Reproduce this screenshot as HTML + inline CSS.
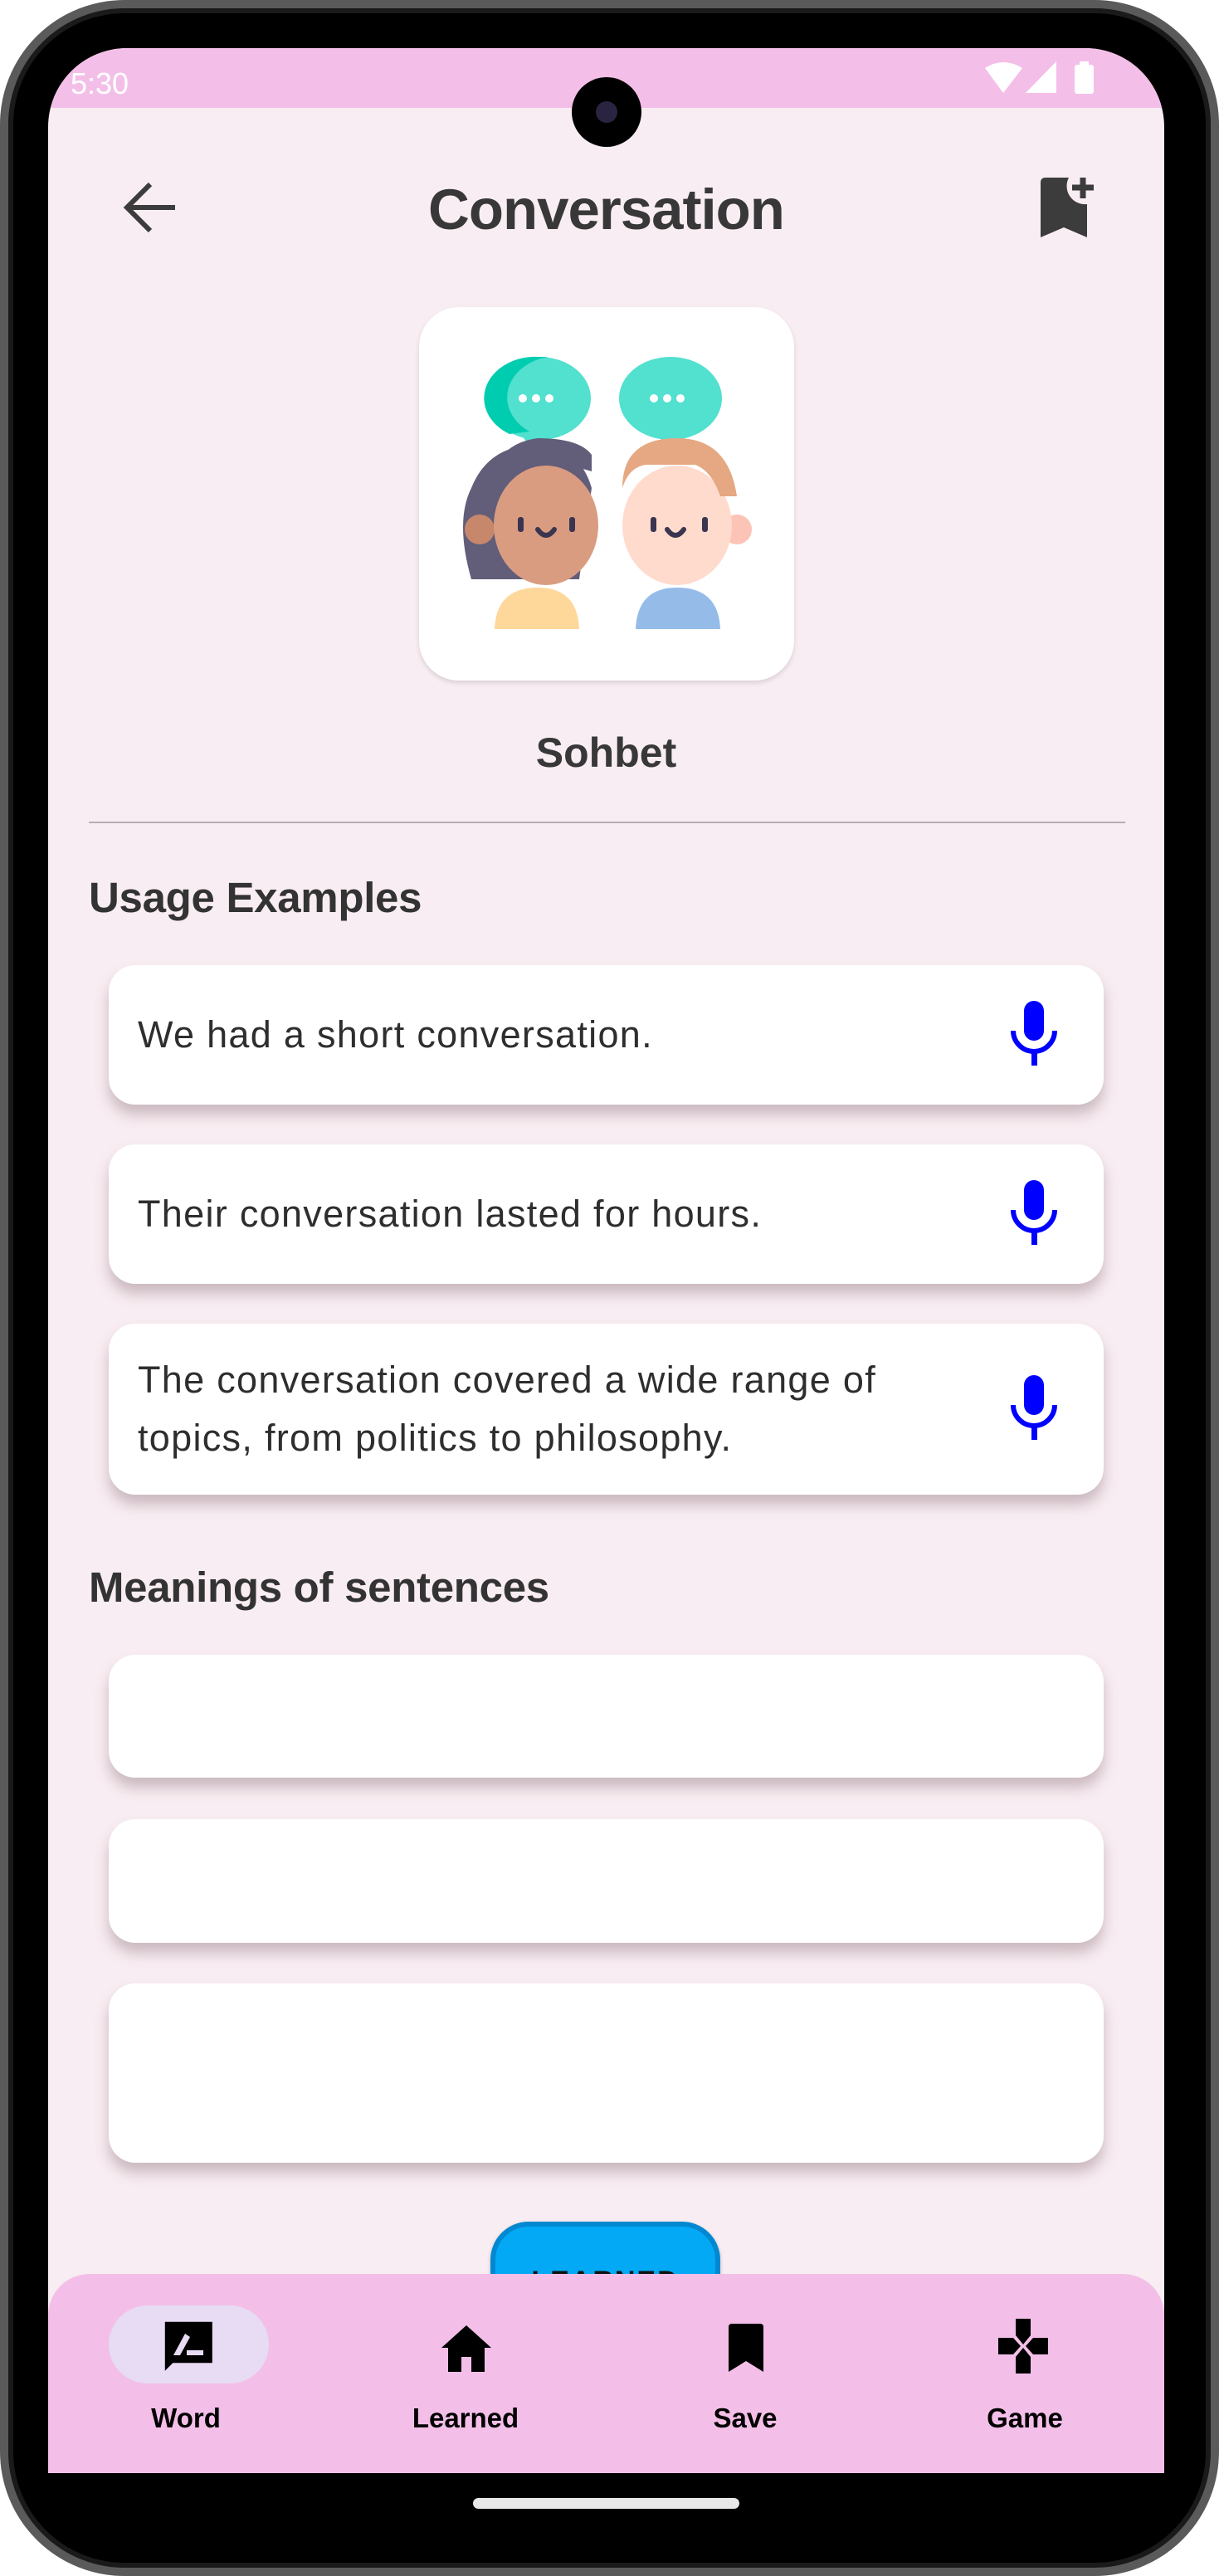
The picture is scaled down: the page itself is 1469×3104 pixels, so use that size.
<!DOCTYPE html>
<html><head><meta charset="utf-8">
<style>
*{margin:0;padding:0;box-sizing:border-box}
html,body{width:1469px;height:3104px;background:#fff;overflow:hidden;font-family:"Liberation Sans",sans-serif}
.frame{position:absolute;left:0;top:0;width:1469px;height:3104px;border-radius:150px;background:#000;border:10px solid #5a5a5a;box-shadow:inset 0 0 0 6px #1a1a1a}
.screen{position:absolute;left:58px;top:58px;width:1345px;height:2922px;background:#f8edf2;border-radius:95px 95px 0 0;overflow:hidden}
.status{position:absolute;left:0;top:0;width:1345px;height:72px;background:#f3bfe8}
.abs{position:absolute}
.card{position:absolute;left:73px;width:1199px;background:#fff;border-radius:32px;box-shadow:0 12px 16px rgba(120,90,100,.35)}
.ex{font-size:45px;color:#2e2e2e;line-height:70px;position:absolute;left:35px;letter-spacing:1.3px}
h2{position:absolute;left:49px;font-size:51px;color:#333;font-weight:bold;letter-spacing:-0.3px}
.lbl{position:absolute;top:2895px;font-size:33px;font-weight:bold;color:#000;transform:translateX(-50%)}
</style></head><body>
<div class="frame"></div>
<div class="screen">
  <div class="status"></div>
  <div class="abs" style="left:27px;top:22px;font-size:36px;color:#fff">5:30</div>
  <svg class="abs" style="left:1129px;top:16px" width="134" height="42" viewBox="0 0 134 42">
    <path d="M0 8 Q22 -6 45 8 L22 38 Z" fill="#fff"/>
    <path d="M49 38 L86 0 L86 38 Z" fill="#fff"/>
    <rect x="108" y="4" width="23" height="35" rx="3" fill="#fff"/><rect x="114" y="0" width="11" height="6" fill="#fff"/>
  </svg>
  <div class="abs" style="left:631px;top:35px;width:84px;height:84px;border-radius:50%;background:#000"></div>
  <div class="abs" style="left:660px;top:64px;width:26px;height:26px;border-radius:50%;background:#2a2440"></div>
  <svg class="abs" style="left:89px;top:160px" width="64" height="64" viewBox="0 0 64 64"><path d="M64 32H6M34 4L6 32l28 28" stroke="#3c3c3c" stroke-width="6" fill="none"/></svg>
  <div class="abs" style="left:0;width:1345px;text-align:center;top:155px;font-size:69px;font-weight:bold;color:#383838;letter-spacing:-1px">Conversation</div>
  <svg class="abs" style="left:1196px;top:156px" width="66" height="72" viewBox="0 0 66 72"><path d="M0 6Q0 0 6 0H34A22 22 0 0 0 56 32V72L28 60 0 72Z" fill="#3c3c3c"/><path d="M38 12H64M51 0V25" stroke="#3c3c3c" stroke-width="7"/></svg>
  <div class="abs" style="left:447px;top:312px;width:452px;height:450px;background:#fff;border-radius:48px;box-shadow:0 3px 6px rgba(0,0,0,.12)"></div>
  <svg class="abs" style="left:490px;top:370px" width="370" height="330" viewBox="0 0 370 330">
    <ellipse cx="102" cy="52" rx="62" ry="50" fill="#52e0cf"/>
    <path d="M102 2 A62 50 0 0 0 66 95 L90 92 A62 50 0 0 1 112 2Z" fill="#00cdb0"/>
    <path d="M80 95 L95 118 L110 95Z" fill="#52e0cf"/>
    <ellipse cx="260" cy="52" rx="62" ry="50" fill="#52e0cf"/>
    <path d="M245 95 L258 118 L272 95Z" fill="#52e0cf"/>
    <g fill="#fff"><circle cx="82" cy="52" r="5"/><circle cx="98" cy="52" r="5"/><circle cx="114" cy="52" r="5"/><circle cx="240" cy="52" r="5"/><circle cx="256" cy="52" r="5"/><circle cx="272" cy="52" r="5"/></g>
    <path d="M20 270 Q0 200 20 160 Q40 110 95 108 Q150 108 165 160 L150 270Z" fill="#625d79"/>
    <path d="M48 330 Q50 280 100 280 Q148 280 150 330Z" fill="#fdd89a"/>
    <circle cx="30" cy="210" r="18" fill="#c7876a"/>
    <ellipse cx="110" cy="205" rx="63" ry="72" fill="#d99c80"/>
    <path d="M50 150 Q80 120 130 130 L165 140 L165 120 Q150 100 100 100 Q60 105 45 140Z" fill="#625d79"/>
    <path d="M218 330 Q220 280 268 280 Q318 280 320 330Z" fill="#95bce8"/>
    <circle cx="340" cy="210" r="18" fill="#fcc4b6"/>
    <ellipse cx="268" cy="205" rx="66" ry="72" fill="#ffdbcd"/>
    <path d="M202 160 Q202 100 268 100 Q330 100 340 170 L320 170 Q310 140 290 132 L230 132 Q210 135 202 160Z" fill="#e5a882"/>
    <g fill="#3a3550"><rect x="76" y="195" width="7" height="18" rx="3"/><rect x="138" y="195" width="7" height="18" rx="3"/><rect x="236" y="195" width="7" height="18" rx="3"/><rect x="298" y="195" width="7" height="18" rx="3"/></g>
    <path d="M100 210 Q110 224 120 210M256 210 Q266 224 276 210" stroke="#3a3550" stroke-width="6" fill="none" stroke-linecap="round"/>
  </svg>
  <div class="abs" style="left:0;width:1345px;text-align:center;top:820px;font-size:50px;font-weight:bold;color:#383838">Sohbet</div>
  <div class="abs" style="left:49px;top:932px;width:1249px;height:2px;background:#b5aeb2"></div>
  <h2 style="top:994px">Usage Examples</h2>
  <div class="card" style="top:1105px;height:168px"><div class="ex" style="top:49px">We had a short conversation.</div></div>
  <div class="card" style="top:1321px;height:168px"><div class="ex" style="top:49px">Their conversation lasted for hours.</div></div>
  <div class="card" style="top:1537px;height:206px"><div class="ex" style="top:33px">The conversation covered a wide range of<br>topics, from politics to philosophy.</div></div>
  <svg class="abs" style="left:1160px;top:1148px" width="56" height="78" viewBox="0 0 56 78"><rect x="16" y="0" width="24" height="48" rx="12" fill="#0000ff"/><path d="M3 36A25 25 0 0 0 53 36" stroke="#0000ff" stroke-width="6" fill="none"/><rect x="25" y="60" width="7" height="18" fill="#0000ff"/></svg>
  <svg class="abs" style="left:1160px;top:1364px" width="56" height="78" viewBox="0 0 56 78"><rect x="16" y="0" width="24" height="48" rx="12" fill="#0000ff"/><path d="M3 36A25 25 0 0 0 53 36" stroke="#0000ff" stroke-width="6" fill="none"/><rect x="25" y="60" width="7" height="18" fill="#0000ff"/></svg>
  <svg class="abs" style="left:1160px;top:1599px" width="56" height="78" viewBox="0 0 56 78"><rect x="16" y="0" width="24" height="48" rx="12" fill="#0000ff"/><path d="M3 36A25 25 0 0 0 53 36" stroke="#0000ff" stroke-width="6" fill="none"/><rect x="25" y="60" width="7" height="18" fill="#0000ff"/></svg>
  <h2 style="top:1825px">Meanings of sentences</h2>
  <div class="card" style="top:1936px;height:148px"></div>
  <div class="card" style="top:2134px;height:149px"></div>
  <div class="card" style="top:2332px;height:216px"></div>
  <div class="abs" style="left:533px;top:2619px;width:277px;height:150px;background:#03a9f4;border:6px solid #0288d1;border-radius:46px;box-shadow:0 2px 5px rgba(0,0,0,.2)"></div>
  <div class="abs" style="left:533px;width:277px;text-align:center;top:2672px;font-size:34px;font-weight:bold;color:#111;letter-spacing:2px">LEARNED</div>
  <div class="abs" style="left:0;top:2682px;width:1345px;height:240px;background:#f3bfe8;border-radius:50px 50px 0 0"></div>
  <div class="abs" style="left:73px;top:2720px;width:193px;height:94px;border-radius:47px;background:#e8dbf4"></div>
  <svg class="abs" style="left:137px;top:2736px" width="64" height="64" viewBox="0 0 64 64"><path d="M4 4H64V56H14L4 66Z" fill="#000" transform="scale(.95)"/><path d="M14 44L28 18L34 22L22 44Z" fill="#e8dbf4"/><rect x="30" y="38" width="20" height="6" fill="#e8dbf4"/></svg>
  <svg class="abs" style="left:474px;top:2744px" width="60" height="56" viewBox="0 0 60 56"><path d="M30 0L60 27H52V56H36V38H24V56H8V27H0Z" fill="#000"/></svg>
  <svg class="abs" style="left:820px;top:2742px" width="42" height="58" viewBox="0 0 42 58"><path d="M0 4Q0 0 4 0H38Q42 0 42 4V58L21 45L0 58Z" fill="#000"/></svg>
  <svg class="abs" style="left:1145px;top:2736px" width="60" height="66" viewBox="0 0 60 66"><path d="M21 0H39V20L30 31L21 20ZM0 23H18L27 33L18 43H0ZM60 23H42L33 33L42 43H60ZM21 66H39V46L30 35L21 46Z" fill="#000"/></svg>
</div>
<div class="lbl" style="left:224px">Word</div>
<div class="lbl" style="left:561px">Learned</div>
<div class="lbl" style="left:898px">Save</div>
<div class="lbl" style="left:1235px">Game</div>
<div class="abs" style="left:570px;top:3010px;width:321px;height:13px;border-radius:7px;background:#e8e8e8"></div>
</body></html>
